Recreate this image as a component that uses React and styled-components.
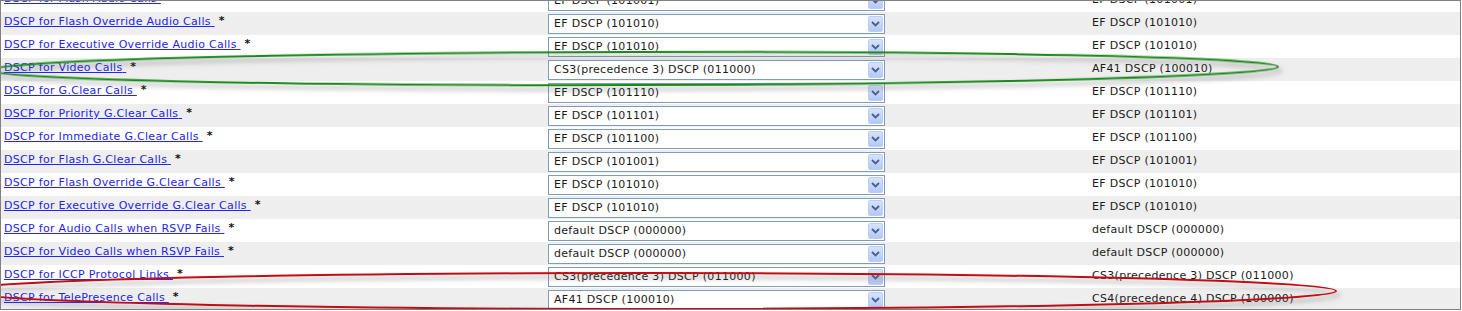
import styled, { createGlobalStyle } from "styled-components";

const GlobalStyle = createGlobalStyle`
  html, body {
    margin: 0;
    padding: 0;
    background: #ffffff;
  }
  body {
    font-family: "DejaVu Sans", Verdana, sans-serif;
    font-size: 11px;
    letter-spacing: 0.3px;
  }
`;

const rows = [
  ["DSCP for Flash Audio Calls", "EF DSCP (101001)", "EF DSCP (101001)"],
  ["DSCP for Flash Override Audio Calls", "EF DSCP (101010)", "EF DSCP (101010)"],
  ["DSCP for Executive Override Audio Calls", "EF DSCP (101010)", "EF DSCP (101010)"],
  ["DSCP for Video Calls", "CS3(precedence 3) DSCP (011000)", "AF41 DSCP (100010)"],
  ["DSCP for G.Clear Calls", "EF DSCP (101110)", "EF DSCP (101110)"],
  ["DSCP for Priority G.Clear Calls", "EF DSCP (101101)", "EF DSCP (101101)"],
  ["DSCP for Immediate G.Clear Calls", "EF DSCP (101100)", "EF DSCP (101100)"],
  ["DSCP for Flash G.Clear Calls", "EF DSCP (101001)", "EF DSCP (101001)"],
  ["DSCP for Flash Override G.Clear Calls", "EF DSCP (101010)", "EF DSCP (101010)"],
  ["DSCP for Executive Override G.Clear Calls", "EF DSCP (101010)", "EF DSCP (101010)"],
  ["DSCP for Audio Calls when RSVP Fails", "default DSCP (000000)", "default DSCP (000000)"],
  ["DSCP for Video Calls when RSVP Fails", "default DSCP (000000)", "default DSCP (000000)"],
  ["DSCP for ICCP Protocol Links", "CS3(precedence 3) DSCP (011000)", "CS3(precedence 3) DSCP (011000)"],
  ["DSCP for TelePresence Calls", "AF41 DSCP (100010)", "CS4(precedence 4) DSCP (100000)"],
];

const App = () => {
  return (
    <>
      <GlobalStyle />
      <Frame>
        <Table>
          {rows.map(([name, value, def], i) => (
            <Row key={name} $shaded={i % 2 === 1}>
              <NameCell>
                <ParamLink href="#">{name} </ParamLink>
                <Required>*</Required>
              </NameCell>
              <ValueCell>
                <Select>
                  <SelectText>{value}</SelectText>
                  <DropButton>
                    <svg width="9" height="6" viewBox="0 0 9 6">
                      <polyline
                        points="1,1 4.5,4.5 8,1"
                        fill="none"
                        stroke="#4d6185"
                        strokeWidth="1.8"
                      />
                    </svg>
                  </DropButton>
                </Select>
              </ValueCell>
              <DefaultCell>{def}</DefaultCell>
            </Row>
          ))}
        </Table>
        <Marks width="1462" height="311" viewBox="0 0 1462 311">
          <defs>
            <filter id="shade" x="-5%" y="-50%" width="110%" height="200%">
              <feDropShadow dx="3" dy="4" stdDeviation="2.5" floodColor="#5e5e5e" floodOpacity="0.6" />
            </filter>
          </defs>
          <ellipse
            cx="634"
            cy="68.5"
            rx="644"
            ry="16.5"
            fill="none"
            stroke="#168a16"
            strokeWidth="2"
            filter="url(#shade)"
            transform="rotate(-0.15 634 68.5)"
          />
          <ellipse
            cx="648"
            cy="291"
            rx="688"
            ry="18"
            fill="none"
            stroke="#c00d12"
            strokeWidth="2"
            filter="url(#shade)"
          />
        </Marks>
      </Frame>
    </>
  );
};

const Frame = styled.div`
  position: relative;
  width: 1461px;
  height: 310px;
  border: 1px solid #808080;
  box-sizing: border-box;
  overflow: hidden;
  background: #ffffff;
`;

const Table = styled.div`
  display: flex;
  flex-direction: column;
  margin-top: -12px;
`;

const Row = styled.div`
  display: grid;
  grid-template-columns: 547px 540px 1fr;
  height: 23px;
  background: ${(p) => (p.$shaded ? "#eeeeee" : "#ffffff")};
`;

const NameCell = styled.div`
  padding-left: 3px;
  line-height: 18px;
  white-space: nowrap;
`;

const ParamLink = styled.a`
  color: #2424f2;
  text-decoration: underline;
`;

const Required = styled.span`
  color: #111111;
  margin-left: 4px;
  font-weight: bold;
  vertical-align: 1px;
`;

const ValueCell = styled.div`
  padding-top: 2px;
`;

const Select = styled.div`
  display: flex;
  align-items: center;
  width: 337px;
  height: 20px;
  box-sizing: border-box;
  border: 1px solid #7f9db9;
  background: #ffffff;
`;

const SelectText = styled.span`
  flex: 1;
  padding-left: 5px;
  line-height: 18px;
  color: #1a1a1a;
  white-space: nowrap;
`;

const DropButton = styled.span`
  display: flex;
  align-items: center;
  justify-content: center;
  width: 15px;
  height: 16px;
  margin-right: 1px;
  box-sizing: border-box;
  border: 1px solid #bccdf5;
  border-radius: 2px;
  background: linear-gradient(180deg, #d6e3fd 0%, #c1d3fb 60%, #b4c8f6 100%);
`;

const DefaultCell = styled.div`
  padding-left: 4px;
  padding-top: 2px;
  line-height: 18px;
  color: #1a1a1a;
  white-space: nowrap;
`;

const Marks = styled.svg`
  position: absolute;
  left: -1px;
  top: -1px;
  pointer-events: none;
  overflow: visible;
`;

export default App;
